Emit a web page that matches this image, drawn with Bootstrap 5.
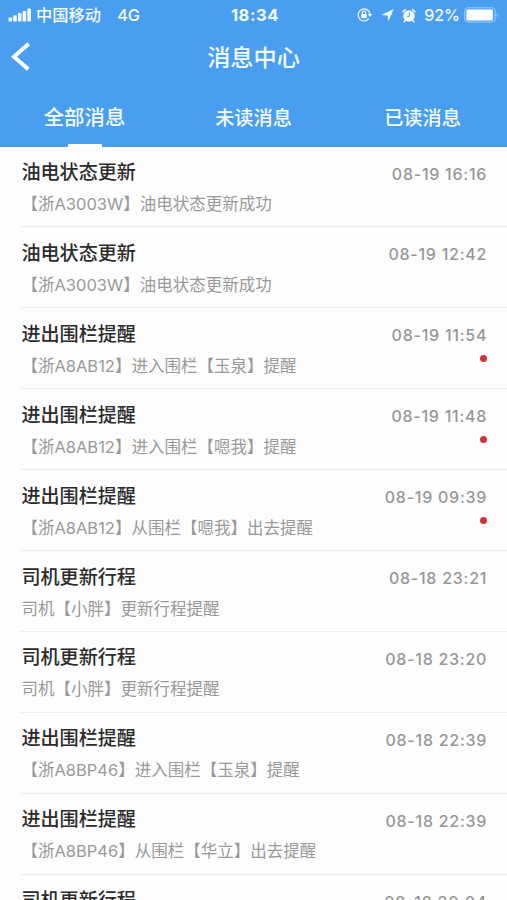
<!DOCTYPE html>
<html lang="zh-CN">
<head>
<meta charset="utf-8">
<meta name="viewport" content="width=device-width, initial-scale=1">
<title>消息中心</title>
<link href="https://cdn.jsdelivr.net/npm/bootstrap@5.3.0/dist/css/bootstrap.min.css" rel="stylesheet">
<style>
body{font-family:Inter,"Noto Sans CJK SC",sans-serif;background:#fdfdfd;height:900px;overflow:hidden}
.app-head{background:#4a9eef;height:146.5px;color:#f4fbff}
.status-bar{height:30px;font-size:16.3px;line-height:30px;padding-left:8px;padding-right:7px;font-weight:500}
.status-bar svg{display:block;flex:none}
.clock{font-weight:700;font-size:16.6px;letter-spacing:.55px;padding-left:2px}
.battery-label{font-size:16px}
.title-bar{height:54px}
.page-title{font-size:23.2px;line-height:57px;font-weight:500}
.back-link{left:10px;top:11px}
.tabs-row{height:62.5px}
.tab-link{font-size:19.2px;line-height:68px;height:62.5px;color:inherit;font-weight:500;text-decoration:none}
.tab-link.current{font-size:20.4px}
.tab-link.current::after{content:"";position:absolute;left:50%;bottom:0;width:34px;height:3px;margin-left:-17px;background:#fff;border-radius:1px 1px 0 0}
main{height:753.5px;overflow:hidden}
.msg-row{height:80.9px;margin-left:21.4px;padding-right:20.6px;position:relative;border-bottom:1.5px solid #ececee}
.msg-title{font-size:19.1px;line-height:28px;padding-top:11.6px;font-weight:500;color:#2b2b2b}
.msg-text{font-size:16.5px;line-height:24px;margin-top:6px;color:#999}
.msg-time{font-size:16px;line-height:24px;padding-top:15px;color:#979797;letter-spacing:.75px;margin-right:-.75px;font-weight:500}
.unread-dot{width:7px;height:7px;background:#d4303a;margin:8px -1px 0 0}
</style>
</head>
<body>
<header class="app-head">
  <div class="status-bar row g-0 text-nowrap">
    <div class="col d-flex align-items-center">
      <svg width="24" height="16" viewBox="0 0 24 16" fill="currentColor"><rect x=".5" y="10.5" width="3.6" height="4" rx=".8"/><rect x="5.2" y="8.3" width="3.6" height="6.2" rx=".8"/><rect x="9.9" y="6.1" width="3.6" height="8.4" rx=".8"/><rect x="14.6" y="3.9" width="3.6" height="10.6" rx=".8"/><rect x="19.3" y="1.5" width="3.6" height="13" rx=".8"/></svg>
      <span class="ms-1">中国移动</span><span class="ms-3">4G</span>
    </div>
    <div class="col-auto clock">18:34</div>
    <div class="col d-flex align-items-center justify-content-end">
      <svg class="me-2" width="17" height="16" viewBox="0 0 17 16" fill="none" stroke="currentColor" stroke-width="1.2"><path d="M12.9 11.6A6 6 0 1 1 14 6.8"/><path d="M11.8 7h4.4L14 10z" fill="currentColor" stroke="none"/><rect x="5.3" y="7" width="5.4" height="4.2" fill="currentColor" stroke="none"/><path d="M6.4 7V5.6a1.6 1.6 0 0 1 3.2 0V7"/></svg>
      <svg class="me-2" width="13" height="14" viewBox="0 0 13 14" fill="currentColor"><path d="M.4 6.9 12.6.9 7.5 13.2 6.6 7.4z"/></svg>
      <svg class="me-2" width="14" height="15" viewBox="0 0 14 15"><circle cx="7" cy="8" r="5.8" fill="currentColor"/><path d="M1 3.8 3.4 1.5M13 3.8 10.6 1.5M3.2 12.6 2.2 13.8M10.8 12.6 11.8 13.8" stroke="currentColor" stroke-width="1.5" stroke-linecap="round"/><path d="M7.4 4.7v3.6H4.9" fill="none" stroke="#4a9eef"/></svg>
      <span class="battery-label">92%</span>
      <svg class="ms-1" width="36" height="16" viewBox="0 0 36 16"><rect x=".7" y=".8" width="30.5" height="14.2" rx="3" fill="none" stroke="#9ccfff"/><rect x="2.4" y="2.6" width="26.5" height="10.8" rx="1.3" fill="#fff"/><path d="M32.8 5.4q2.2 2.5 0 5z" fill="#9ccfff"/></svg>
    </div>
  </div>
  <div class="title-bar position-relative text-center">
    <a href="#" class="back-link position-absolute text-white" aria-label="返回"><svg class="d-block" width="21" height="31" viewBox="0 0 21 31" fill="none" stroke="currentColor" stroke-width="4"><path d="M18.8 2.8 4 15.7 18.3 28.3"/></svg></a>
    <div class="page-title">消息中心</div>
  </div>
  <nav class="tabs-row row g-0 text-center">
    <a href="#" class="col tab-link current position-relative">全部消息</a>
    <a href="#" class="col tab-link">未读消息</a>
    <a href="#" class="col tab-link">已读消息</a>
  </nav>
</header>
<main>
  <article class="msg-row d-flex justify-content-between text-nowrap"><div><div class="msg-title">油电状态更新</div><div class="msg-text">【浙A3003W】油电状态更新成功</div></div><div class="msg-time">08-19 16:16</div></article>
  <article class="msg-row d-flex justify-content-between text-nowrap"><div><div class="msg-title">油电状态更新</div><div class="msg-text">【浙A3003W】油电状态更新成功</div></div><div class="msg-time">08-19 12:42</div></article>
  <article class="msg-row d-flex justify-content-between text-nowrap"><div><div class="msg-title">进出围栏提醒</div><div class="msg-text">【浙A8AB12】进入围栏【玉泉】提醒</div></div><div class="d-flex flex-column align-items-end"><div class="msg-time">08-19 11:54</div><span class="unread-dot rounded-circle"></span></div></article>
  <article class="msg-row d-flex justify-content-between text-nowrap"><div><div class="msg-title">进出围栏提醒</div><div class="msg-text">【浙A8AB12】进入围栏【嗯我】提醒</div></div><div class="d-flex flex-column align-items-end"><div class="msg-time">08-19 11:48</div><span class="unread-dot rounded-circle"></span></div></article>
  <article class="msg-row d-flex justify-content-between text-nowrap"><div><div class="msg-title">进出围栏提醒</div><div class="msg-text">【浙A8AB12】从围栏【嗯我】出去提醒</div></div><div class="d-flex flex-column align-items-end"><div class="msg-time">08-19 09:39</div><span class="unread-dot rounded-circle"></span></div></article>
  <article class="msg-row d-flex justify-content-between text-nowrap"><div><div class="msg-title">司机更新行程</div><div class="msg-text">司机【小胖】更新行程提醒</div></div><div class="msg-time">08-18 23:21</div></article>
  <article class="msg-row d-flex justify-content-between text-nowrap"><div><div class="msg-title">司机更新行程</div><div class="msg-text">司机【小胖】更新行程提醒</div></div><div class="msg-time">08-18 23:20</div></article>
  <article class="msg-row d-flex justify-content-between text-nowrap"><div><div class="msg-title">进出围栏提醒</div><div class="msg-text">【浙A8BP46】进入围栏【玉泉】提醒</div></div><div class="msg-time">08-18 22:39</div></article>
  <article class="msg-row d-flex justify-content-between text-nowrap"><div><div class="msg-title">进出围栏提醒</div><div class="msg-text">【浙A8BP46】从围栏【华立】出去提醒</div></div><div class="msg-time">08-18 22:39</div></article>
  <article class="msg-row d-flex justify-content-between text-nowrap"><div><div class="msg-title">司机更新行程</div></div><div class="msg-time">08-18 20:04</div></article>
</main>
<script src="https://cdn.jsdelivr.net/npm/bootstrap@5.3.0/dist/js/bootstrap.bundle.min.js"></script>
</body>
</html>
